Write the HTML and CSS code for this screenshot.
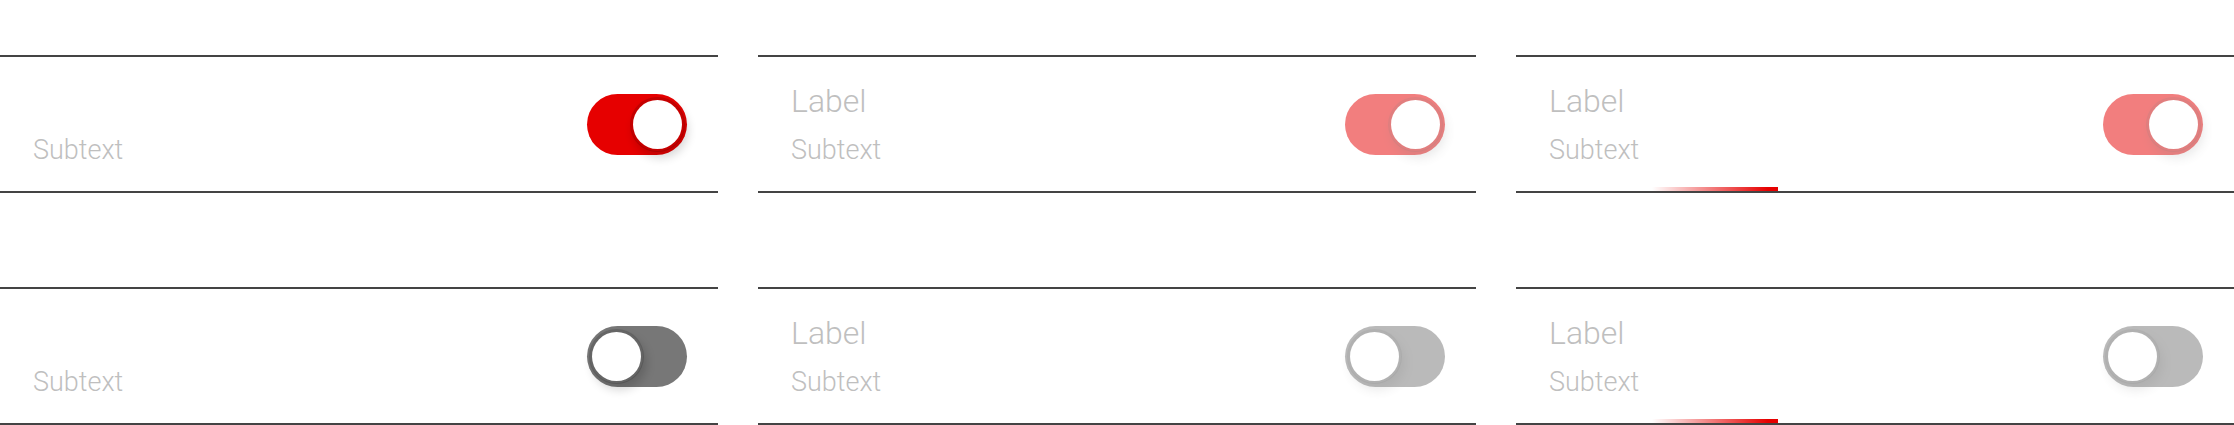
FILE: index.html
```html
<!DOCTYPE html>
<html>
<head>
<meta charset="utf-8">
<link rel="stylesheet" href="styles.css">
</head>
<body>
<div class="grid">
  <div class="col">
    <div class="block first">
      <div class="row">
        <div class="texts"><div class="label"></div><div class="sub">Subtext</div></div>
        <div class="toggle on"><span class="knob"></span></div>
      </div>
    </div>
    <div class="block second">
      <div class="row">
        <div class="texts"><div class="label"></div><div class="sub">Subtext</div></div>
        <div class="toggle off"><span class="knob"></span></div>
      </div>
    </div>
  </div>
  <div class="col">
    <div class="block first">
      <div class="row">
        <div class="texts"><div class="label">Label</div><div class="sub">Subtext</div></div>
        <div class="toggle on disabled"><span class="knob"></span></div>
      </div>
    </div>
    <div class="block second">
      <div class="row">
        <div class="texts"><div class="label">Label</div><div class="sub">Subtext</div></div>
        <div class="toggle off disabled"><span class="knob"></span></div>
      </div>
    </div>
  </div>
  <div class="col">
    <div class="block first">
      <div class="row">
        <div class="texts"><div class="label">Label</div><div class="sub">Subtext</div></div>
        <div class="toggle on disabled"><span class="knob"></span></div>
        <div class="progress"></div>
      </div>
    </div>
    <div class="block second">
      <div class="row">
        <div class="texts"><div class="label">Label</div><div class="sub">Subtext</div></div>
        <div class="toggle off disabled"><span class="knob"></span></div>
        <div class="progress"></div>
      </div>
    </div>
  </div>
</div>
</body>
</html>
```

FILE: styles.css
```css
html, body {
  margin: 0;
  padding: 0;
  background: #ffffff;
}

body {
  font-family: Roboto, "Liberation Sans", sans-serif;
  font-weight: 300;
  width: 2234px;
  height: 425px;
  overflow: hidden;
}

.grid {
  display: grid;
  grid-template-columns: repeat(3, 1fr);
  column-gap: 40px;
}

.col {
  display: flex;
  flex-direction: column;
}

.block.first {
  margin-top: 55px;
}

.block.second {
  margin-top: 94px;
}

.row {
  position: relative;
  height: 134px;
  border-top: 2px solid #444444;
  border-bottom: 2px solid #444444;
  display: flex;
  align-items: center;
  justify-content: space-between;
  padding: 0 31px 0 33px;
}

.texts {
  display: flex;
  flex-direction: column;
  gap: 3px;
  padding-top: 3px;
  color: #bfbfbf;
}

.label {
  font-size: 32px;
  line-height: 46px;
  height: 46px;
}

.sub {
  font-size: 27px;
  line-height: 46px;
}

.toggle {
  position: relative;
  width: 100px;
  height: 61px;
  border-radius: 31px;
  display: flex;
  align-items: center;
  padding: 0 2px;
  box-sizing: border-box;
}

.toggle.on {
  background: #e60000;
  justify-content: flex-end;
}

.toggle.off {
  background: #777777;
  justify-content: flex-start;
}

.toggle.disabled {
  opacity: 0.5;
}

.knob {
  width: 55px;
  height: 55px;
  box-sizing: border-box;
  border-radius: 50%;
  background: #ffffff;
  background-clip: padding-box;
  border: 3px solid rgba(0, 0, 0, 0.14);
  box-shadow: 3px 6px 10px rgba(0, 0, 0, 0.16);
}

.progress {
  position: absolute;
  left: 136px;
  bottom: 0;
  width: 126px;
  height: 4px;
  background: linear-gradient(to right, rgba(230, 0, 0, 0), #e60000 92%);
}
```
